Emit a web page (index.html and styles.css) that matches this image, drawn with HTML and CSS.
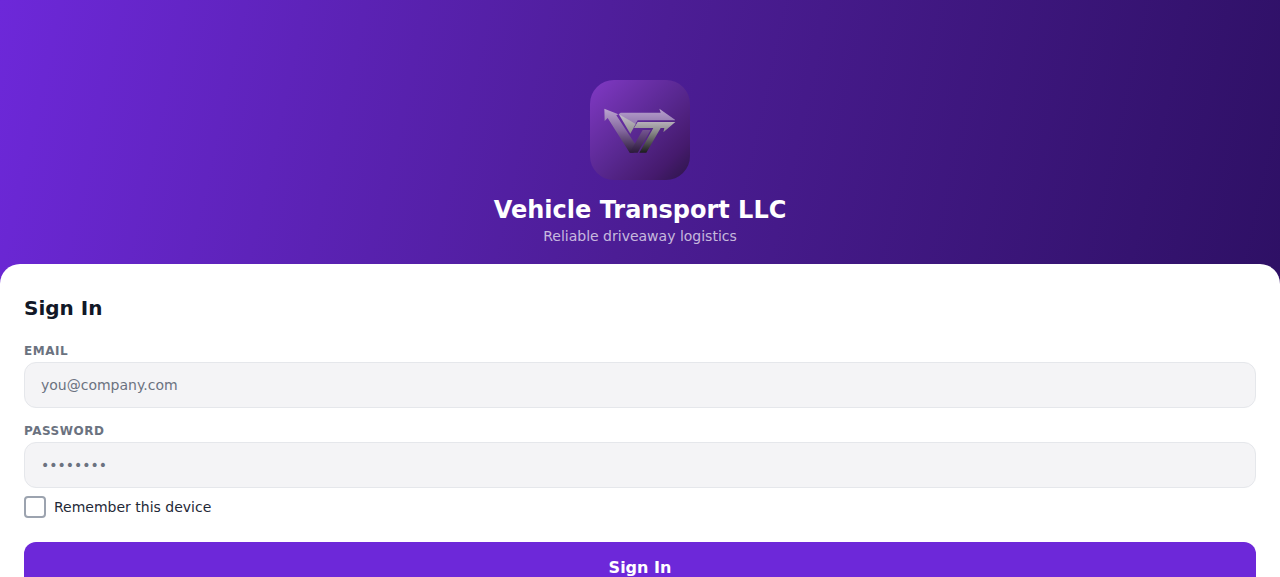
FILE: index.html
```html
<!doctype html>
<html lang="en">
<head>
<meta charset="utf-8">
<title>Vehicle Transport LLC</title>
<meta name="viewport" content="width=device-width,initial-scale=1">
<link rel="stylesheet" href="styles.css">
</head>
<body>

<header class="hero">
  <svg class="logo" viewBox="15 15 300 300" aria-hidden="true">
    <defs>
      <linearGradient id="tile" x1="0" y1="0" x2="1" y2="1">
        <stop offset="0" stop-color="#8139c5"/>
        <stop offset=".5" stop-color="#592891"/>
        <stop offset=".8" stop-color="#451a6d"/>
        <stop offset="1" stop-color="#2c1548"/>
      </linearGradient>
      <linearGradient id="vee" gradientUnits="userSpaceOnUse" x1="0" y1="101" x2="0" y2="233">
        <stop offset="0" stop-color="#bda5d1"/>
        <stop offset=".5" stop-color="#83679d"/>
        <stop offset="1" stop-color="#2c1b3b"/>
      </linearGradient>
      <linearGradient id="arm" gradientUnits="userSpaceOnUse" x1="0" y1="165" x2="0" y2="233">
        <stop offset="0" stop-color="#745491"/>
        <stop offset="1" stop-color="#2c1b3b"/>
      </linearGradient>
      <linearGradient id="bar" gradientUnits="userSpaceOnUse" x1="0" y1="102" x2="0" y2="150">
        <stop offset="0" stop-color="#b7a0cc"/>
        <stop offset="1" stop-color="#8f75ac"/>
      </linearGradient>
      <linearGradient id="facet" gradientUnits="userSpaceOnUse" x1="0" y1="116" x2="0" y2="175">
        <stop offset="0" stop-color="#c9c2cf"/>
        <stop offset="1" stop-color="#8d8c8c"/>
      </linearGradient>
      <linearGradient id="tee" gradientUnits="userSpaceOnUse" x1="0" y1="142" x2="0" y2="233">
        <stop offset="0" stop-color="#b4aeb7"/>
        <stop offset=".35" stop-color="#858585"/>
        <stop offset="1" stop-color="#1c1c1e"/>
      </linearGradient>
    </defs>
    <rect x="15" y="15" width="300" height="300" fill="url(#tile)"/>
    <path fill="url(#vee)" d="M58 101 100 118 94 121 150 206 146 233H134L68 129 59 138Z"/>
    <path fill="url(#arm)" d="M173 165H197L158 233H134Z"/>
    <path fill="url(#bar)" d="M107 113H227L223 101 270 134V136H158L150 149 101 118Z"/>
    <path fill="url(#facet)" d="M101 117 152 147 136 176Z"/>
    <path fill="url(#tee)" d="M158 141H271L235 172 238 159H227L184 233H163L205 159H147Z"/>
  </svg>
  <h1>Vehicle Transport LLC</h1>
  <p>Reliable driveaway logistics</p>
</header>

<main class="sheet">
  <h2>Sign In</h2>
  <form>
    <label class="field-label" for="email">Email</label>
    <input class="field" id="email" type="email" placeholder="you@company.com">

    <label class="field-label" for="password">Password</label>
    <input class="field" id="password" type="password" placeholder="••••••••">

    <label class="remember">
      <input type="checkbox">
      <span>Remember this device</span>
    </label>

    <button class="submit" type="button">Sign In</button>
  </form>
</main>

</body>
</html>
```
FILE: styles.css
```css
*{box-sizing:border-box;margin:0;padding:0}
html,body{height:100%}
body{
  font-family:"DejaVu Sans",sans-serif;
  background:#fff;
  color:#111827;
  overflow:hidden;
}

/* purple header */
.hero{
  display:flex;
  flex-direction:column;
  align-items:center;
  height:284px;
  padding-top:80px;
  background:linear-gradient(102.5deg,#6d28d9,#4c1d95 50%,#2e1065);
}
.logo{
  width:100px;
  height:100px;
  border-radius:24px;
}
.hero h1{
  margin-top:16px;
  font-size:24px;
  line-height:28px;
  color:#fff;
}
.hero p{
  margin-top:4px;
  font-size:14px;
  line-height:17px;
  color:rgba(255,255,255,.7);
}

/* white sheet, overlaps the header */
.sheet{
  position:relative;
  margin-top:-20px;
  padding:32px 24px 0;
  background:#fff;
  border-radius:20px 20px 0 0;
}
.sheet h2{
  margin-bottom:24px;
  font-size:20px;
  line-height:24px;
}
.field-label{
  display:block;
  margin-bottom:4px;
  font-size:12px;
  font-weight:700;
  line-height:14px;
  letter-spacing:.5px;
  text-transform:uppercase;
  color:#6b7280;
}
.field{
  display:block;
  width:100%;
  height:46px;
  margin-bottom:16px;
  padding:0 16px;
  font:14px "DejaVu Sans",sans-serif;
  color:#111827;
  background:#f4f4f6;
  border:1px solid #e5e7eb;
  border-radius:12px;
}
.field::placeholder{color:#6b7280}

.remember{
  display:flex;
  align-items:center;
  gap:8px;
  margin:-8px 0 24px;
  font-size:14px;
  color:#1f2937;
}
.remember input{
  appearance:none;
  width:22px;
  height:22px;
  border:2px solid #9ca3af;
  border-radius:4px;
}
.submit{
  display:block;
  width:100%;
  height:51px;
  font:700 16px "DejaVu Sans",sans-serif;
  color:#fff;
  background:#6d28d9;
  border:none;
  border-radius:12px;
}
```
